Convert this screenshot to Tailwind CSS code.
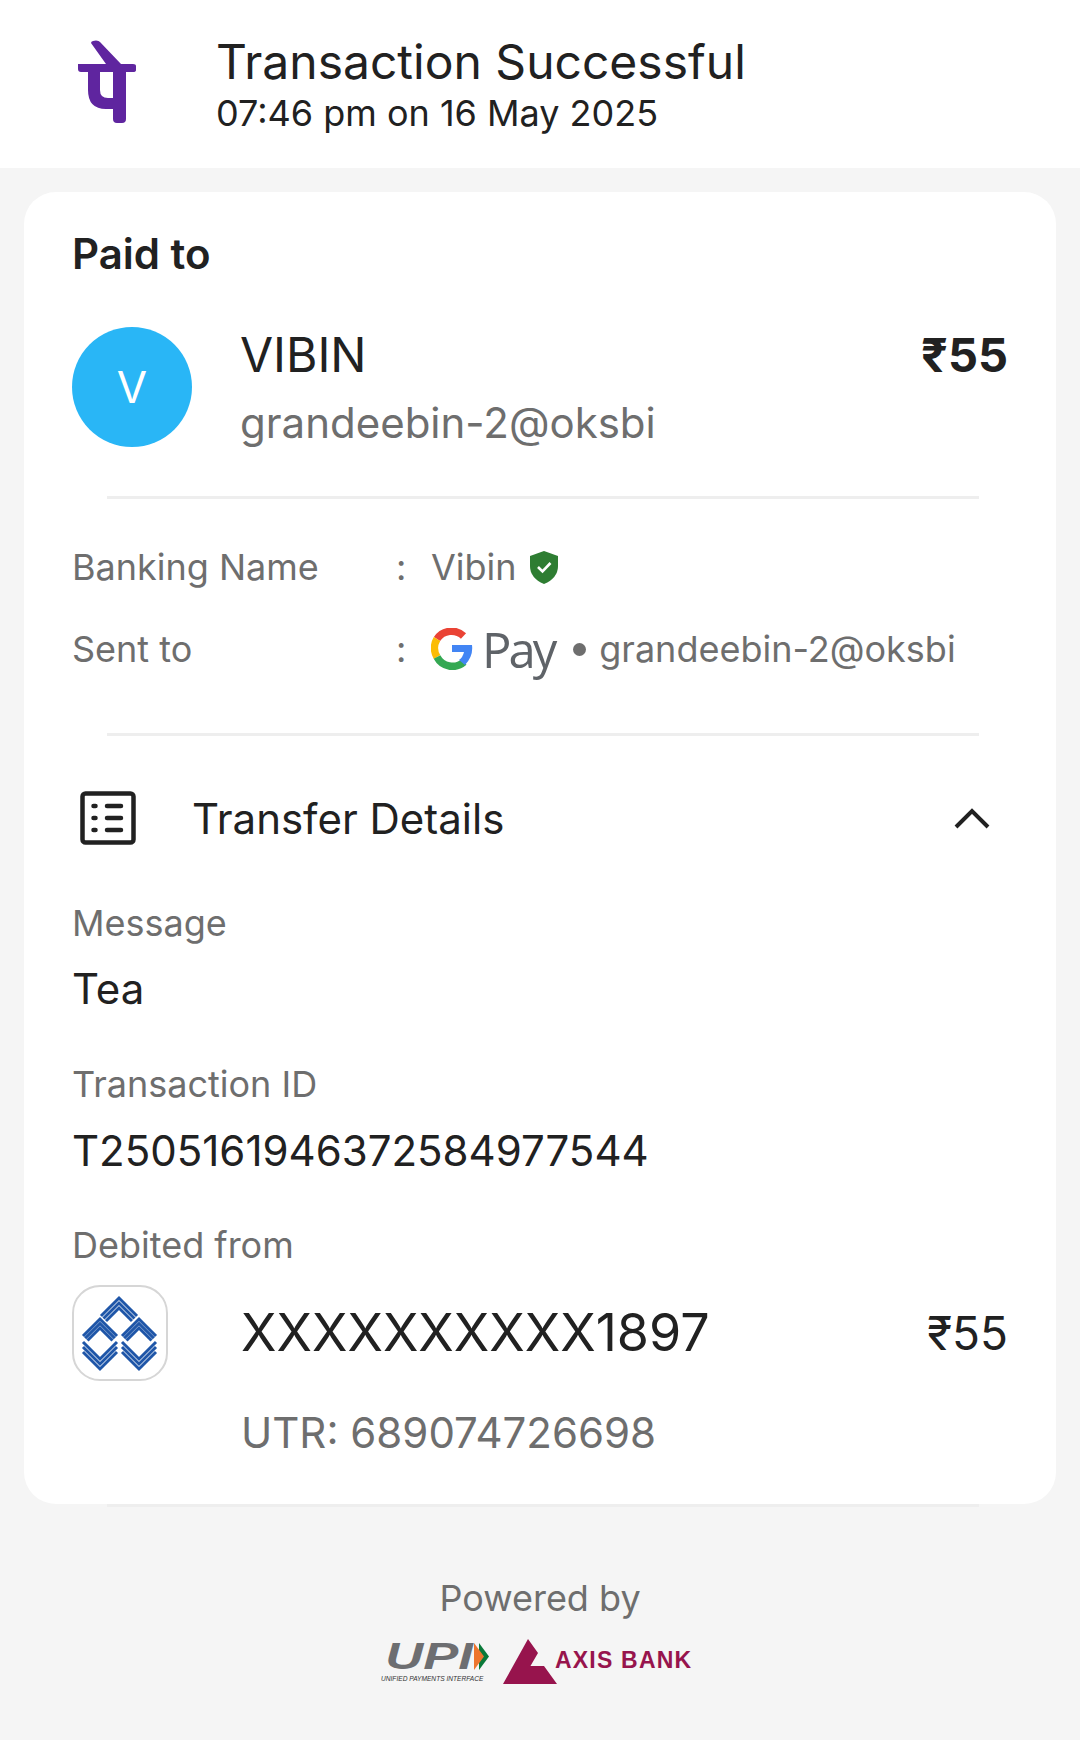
<!DOCTYPE html>
<html lang="en">
  <head>
    <meta charset="UTF-8" />
    <meta name="viewport" content="width=device-width, initial-scale=1.0" />
    <title>Transaction Successful</title>
    <script src="https://cdn.jsdelivr.net/npm/@tailwindcss/browser@4"></script>
  </head>
  <body class="m-0">
    <div class="w-[1080px] h-[1740px] overflow-hidden bg-[#f5f5f5] font-['Inter',sans-serif] text-[#212121]">
      <!-- header -->
      <div class="h-[168px] bg-white flex">
        <div class="w-[216px] shrink-0 pl-[78px] pt-[40px]">
          <svg width="58" height="84" viewBox="0 0 58 84">
            <path fill="#5f259f" fill-rule="evenodd" d="M13 3 Q13 1.5 15 1 L18 0.5 Q21 0.5 22 2 L43 24 L55 24 Q58 24 58 26 L58 30 Q58 32 55 32 L48 32 L48 79 Q48 83 44 83 L39 83 Q35 83 35 79 L35 69 L28 69 Q10 69 10 50 L10 32 L3 32 Q0 32 0 29 L0 24 L28 24 L13 3 Z M22 32 L22 50 Q22 58 30 58 L35 58 L35 32 Z"/>
          </svg>
        </div>
        <div class="pt-[33px]">
          <div class="text-[48px] leading-[58px]">Transaction Successful</div>
          <div class="text-[36px] leading-[44px]">07:46 pm on 16 May 2025</div>
        </div>
      </div>

      <!-- card -->
      <div class="relative mt-[24px] mx-[24px] w-[1032px] h-[1312px] bg-white rounded-[32px] px-[48px] pt-[36px]">
        <div class="text-[42px] leading-[52px] font-semibold">Paid to</div>

        <div class="flex mt-[47px]">
          <div class="w-[120px] h-[120px] rounded-full bg-[#29b6f6] text-white text-[44px] flex items-center justify-center shrink-0">V</div>
          <div class="ml-[48px] flex-1">
            <div class="flex justify-between items-center h-[56px]">
              <span class="text-[48px] leading-[56px]">VIBIN</span>
              <span class="text-[47px] leading-[56px] font-bold">₹55</span>
            </div>
            <div class="text-[42px] leading-[52px] text-[#6e6e6e] mt-[14px]">grandeebin-2@oksbi</div>
          </div>
        </div>

        <div class="h-[3px] bg-[#eeeeee] ml-[35px] mr-[29px] mt-[47px]"></div>

        <div class="mt-[44px] flex items-center h-[48px] text-[36px] text-[#6e6e6e]">
          <span class="w-[324px]">Banking Name</span>
          <span class="w-[35px]">:</span>
          <span>Vibin</span>
          <svg class="ml-[13px]" width="28" height="33" viewBox="0 0 28 33">
            <path fill="#2e7d32" d="M14 0 L28 5 L28 15 Q28 27 14 33 Q0 27 0 15 L0 5 Z"/>
            <path fill="none" stroke="#fff" stroke-width="2.6" d="M8 16 L12.5 20.5 L20.5 12"/>
          </svg>
        </div>

        <div class="mt-[34px] flex items-center h-[48px] text-[36px] text-[#6e6e6e]">
          <span class="w-[324px]">Sent to</span>
          <span class="w-[35px]">:</span>
          <svg width="42" height="42" viewBox="0 0 42 42">
            <path fill="none" stroke="#ea4335" stroke-width="7.5" d="M6 11 A17.5 17.5 0 0 1 32.5 8"/>
            <path fill="none" stroke="#fbbc04" stroke-width="7.5" d="M6 11 A17.5 17.5 0 0 0 6 29"/>
            <path fill="none" stroke="#34a853" stroke-width="7.5" d="M6 29 A17.5 17.5 0 0 0 33 34"/>
            <path fill="#4285f4" d="M21 17 L41 17 Q42.5 28 34 37 L28 32 Q32 29 33 24 L21 24 Z"/>
          </svg>
          <span class="ml-[9px] text-[49px] leading-[48px] tracking-[-3px] text-[#5f6368] font-medium font-['Open_Sans',sans-serif]">Pay</span>
          <span class="w-[13px] h-[13px] rounded-full bg-[#6e6e6e] ml-[19px]"></span>
          <span class="ml-[13px]">grandeebin-2@oksbi</span>
        </div>

        <div class="h-[3px] bg-[#eeeeee] ml-[35px] mr-[29px] mt-[60px]"></div>

        <div class="flex items-center mt-[52px] h-[60px]">
          <svg class="ml-[8px]" width="56" height="54" viewBox="0 0 56 54">
            <rect x="2.5" y="2.5" width="51" height="49" rx="3" fill="none" stroke="#212121" stroke-width="4.5"/>
            <g stroke="#212121" stroke-width="4.5" stroke-linecap="round">
              <path d="M13.5 15 H15.5 M27 15 H41"/>
              <path d="M13.5 27 H15.5 M27 27 H41"/>
              <path d="M13.5 39 H15.5 M27 39 H41"/>
            </g>
          </svg>
          <span class="ml-[56px] text-[42px]">Transfer Details</span>
          <svg class="ml-auto mr-[18px]" width="36" height="22" viewBox="0 0 36 22">
            <path fill="none" stroke="#212121" stroke-width="4" d="M2 20 L18 4 L34 20"/>
          </svg>
        </div>

        <div class="mt-[53px] text-[36px] leading-[44px] text-[#6e6e6e]">Message</div>
        <div class="mt-[22px] text-[42px] leading-[44px]">Tea</div>

        <div class="mt-[51px] text-[36px] leading-[44px] text-[#6e6e6e]">Transaction ID</div>
        <div class="mt-[23px] text-[42px] leading-[44px]">T2505161946372584977544</div>

        <div class="mt-[50px] text-[36px] leading-[44px] text-[#6e6e6e]">Debited from</div>

        <div class="flex mt-[18px]">
          <div class="w-[96px] h-[96px] rounded-[28px] border-2 border-[#d6d6d6] shrink-0">
            <svg width="92" height="92" viewBox="2 -1 92 92" fill="none" stroke="#1f56a8" stroke-width="3">
              <path d="M29 28 L47 10 L65 28 M31.5 30.5 L47 15 L62.5 30.5 M34 33 L47 20 L60 33"/>
              <path d="M11 48 L28 31 L45 48 M13.2 50.2 L28 35.5 L42.8 50.2 M15.5 52.5 L28 40 L40.5 52.5"/>
              <path d="M11 54 L28 71 L45 54 M11 59 L28 76 L45 59 M11 64 L28 81 L45 64"/>
              <path d="M50 48 L67 31 L84 48 M52.2 50.2 L67 35.5 L81.8 50.2 M54.5 52.5 L67 40 L79.5 52.5"/>
              <path d="M50 54 L67 71 L84 54 M50 59 L67 76 L84 59 M50 64 L67 81 L84 64"/>
            </svg>
          </div>
          <div class="ml-[73px] flex-1 pt-[20px]">
            <div class="flex justify-between items-center h-[56px]">
              <span class="text-[52px]">XXXXXXXXXX1897</span>
              <span class="text-[46px]">₹55</span>
            </div>
            <div class="mt-[50px] text-[42px] leading-[44px] text-[#6e6e6e]">UTR: 689074726698</div>
          </div>
        </div>

        <div class="absolute left-[83px] right-[77px] bottom-[-3px] h-[3px] bg-[#eeeeee]"></div>
      </div>

      <!-- footer -->
      <div class="mt-[72px] text-center text-[36px] leading-[44px] text-[#6e6e6e]">Powered by</div>
      <div class="mt-[19px] pl-[381px] flex items-start">
        <div class="w-[122px] h-[46px] relative font-['Liberation_Sans',sans-serif] italic">
          <div class="mt-[4px] h-[27px] font-bold text-[37px] leading-[27px] text-[#6d6e71] scale-x-[1.42] origin-left pl-[3px]">UPI</div>
          <svg class="absolute left-[93px] top-[4px]" width="15" height="27" viewBox="0 0 15 27">
            <path fill="#097939" d="M5 0 L15 13.5 L5 27 Z"/>
            <path fill="#ed752e" d="M0 0 L10 13.5 L0 27 Z"/>
          </svg>
          <div class="mt-[4px] whitespace-nowrap text-[7.5px] leading-[10px] text-[#333333] scale-x-[0.88] origin-left">UNIFIED PAYMENTS INTERFACE</div>
        </div>
        <svg width="54" height="45" viewBox="0 0 54 45">
          <path fill="#97144d" d="M0 45 L25 0 L35 14 L17 45 Z M27 27 L41 27 L54 45 L17 45 Z"/>
        </svg>
        <div class="ml-[-2px] mt-[7px] font-['Liberation_Sans',sans-serif] font-bold text-[23px] leading-[28px] tracking-[1.2px] text-[#97144d] whitespace-nowrap">AXIS BANK</div>
      </div>
    </div>
  </body>
</html>
